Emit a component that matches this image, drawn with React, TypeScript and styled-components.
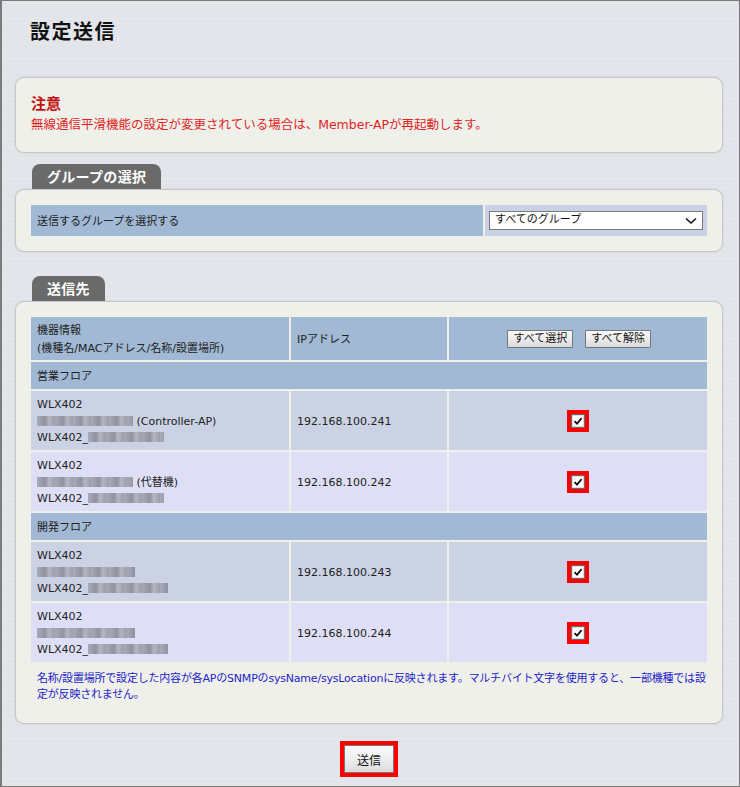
import React from 'react';
import styled, {createGlobalStyle} from 'styled-components';

const GlobalStyle = createGlobalStyle`
  html, body {
    margin: 0;
    padding: 0;
  }
  body {
    font-family: "DejaVu Sans", "Noto Sans CJK JP", sans-serif;
    font-size: 11px;
    color: #222;
  }
`;

const Page = styled.div`
  box-sizing: border-box;
  width: 740px;
  height: 787px;
  border: 1px solid #7a7a7a;
  border-left-width: 2px;
  padding: 0 16px 0 13px;
  background-color: #e3e6eb;
  background-image: repeating-linear-gradient(
    180deg,
    #e6e8ec 0px,
    #dcdfe5 1px,
    #e9ebef 2px,
    #e0e3e8 3px,
    #e4e6eb 5px
  );
  overflow: hidden;
`;

const Title = styled.h1`
  margin: 0;
  padding: 15px 0 0 15px;
  height: 61px;
  font-family: "Noto Sans CJK JP", sans-serif;
  font-size: 20px;
  font-weight: bold;
  color: #111;
  letter-spacing: 1.5px;
`;

const Panel = styled.div`
  box-sizing: border-box;
  background: #f0f0eb;
  border: 1px solid #c6c6c6;
  border-radius: 9px;
  box-shadow: 0 0 2px rgba(0, 0, 0, 0.12);
  padding: 15px;
`;

const NoticePanel = styled(Panel)`
  height: 76px;
  padding: 14px 15px 0 15px;
`;

const NoticeHead = styled.div`
  font-family: "Noto Sans CJK JP", sans-serif;
  color: #c21313;
  font-size: 15px;
  font-weight: bold;
  line-height: 22px;
  margin-bottom: 3px;
`;

const NoticeText = styled.div`
  color: #e01e1e;
  font-size: 12.5px;
  line-height: 16px;
`;

const Section = styled.section<{$top: number}>`
  margin-top: ${p => p.$top}px;
`;

const Tab = styled.div`
  display: inline-block;
  margin-left: 17px;
  height: 25px;
  line-height: 25px;
  padding: 0 15px;
  background: #6a6a6a;
  color: #fff;
  font-family: "Noto Sans CJK JP", sans-serif;
  font-size: 14px;
  font-weight: bold;
  border-radius: 8px 8px 0 0;
  letter-spacing: 0.3px;
`;

const TabRow = styled.div`
  height: 25px;
  display: flex;
  align-items: flex-end;
`;

const Table = styled.table`
  width: calc(100% + 4px);
  margin: -2px;
  border-collapse: separate;
  border-spacing: 2px;
  font-size: 11px;
  color: #222;
`;

const Cell = styled.td<{$tone: 'head' | 'light' | 'odd' | 'even'; $center?: boolean; $w?: number; $lh?: number}>`
  box-sizing: border-box;
  padding: 3px 6px 0;
  line-height: ${p => p.$lh ?? 16.5}px;
  text-align: ${p => (p.$center ? 'center' : 'left')};
  width: ${p => (p.$w ? `${p.$w}px` : 'auto')};
  background: ${p =>
    p.$tone === 'head' ? '#a1b9d4' : p.$tone === 'light' ? '#c9d1e5' : p.$tone === 'odd' ? '#cbd2e4' : '#dedff6'};
`;

const Row = styled.tr<{$h: number}>`
  height: ${p => p.$h}px;
`;

const SelectBox = styled.div`
  box-sizing: border-box;
  height: 19px;
  margin: -3px -2px 0;
  display: flex;
  align-items: center;
  justify-content: space-between;
  padding: 0 5px;
  background: #fff;
  border: 1px solid #7b7b7b;
  font-size: 11px;
  color: #111;
`;

const Button = styled.button`
  font-family: "DejaVu Sans", "Noto Sans CJK JP", sans-serif;
  font-size: 11px;
  color: #111;
  height: 18px;
  padding: 0 5px;
  line-height: 14px;
  border: 1px solid #777;
  border-radius: 1px;
  background: linear-gradient(180deg, #fafafa 0%, #ececec 50%, #dadada 100%);
  margin: 0 6px;
`;

const ButtonRow = styled.div`
  display: flex;
  justify-content: flex-end;
  padding-right: 44px;
  margin-top: -3px;
`;

const Blur = styled.span<{$w: number}>`
  display: inline-block;
  width: ${p => p.$w}px;
  height: 10px;
  vertical-align: -1px;
  background: repeating-linear-gradient(
    90deg,
    #a9acb8 0px,
    #8f939f 8px,
    #b4b7c2 12px,
    #9a9eaa 18px
  );
  filter: blur(0.7px);
`;

const RedFrame = styled.span`
  display: inline-flex;
  align-items: center;
  justify-content: center;
  background: #f00;
  padding: 4px;
  vertical-align: middle;
`;

const CheckFrame = styled(RedFrame)`
  margin-top: -3px;
`;

const CheckBox = styled.span`
  box-sizing: border-box;
  width: 14px;
  height: 14px;
  background: #fff;
  border: 1px solid #6a6a6a;
  box-shadow: inset 0 0 0 1px #ddd;
  display: flex;
  align-items: center;
  justify-content: center;
`;

const Note = styled.p`
  margin: 9px -4px 0 6px;
  color: #2323c8;
  font-size: 11px;
  line-height: 16px;
  letter-spacing: -0.2px;
`;

const SendPanel = styled(Panel)`
  padding-bottom: 20px;
`;

const Footer = styled.div`
  display: flex;
  justify-content: center;
  margin-top: 17px;
`;

const SendButton = styled.button`
  font-family: "Noto Sans CJK JP", sans-serif;
  font-size: 12px;
  color: #111;
  width: 50px;
  height: 28px;
  border: 1px solid #777;
  background: linear-gradient(180deg, #fafafa 0%, #eeeeee 50%, #dcdcdc 100%);
  padding: 0;
`;

const Check = () => (
    <CheckFrame>
        <CheckBox>
            <svg width="10" height="10" viewBox="0 0 10 10">
                <path d="M1.5 5.2 L4 7.6 L8.6 2.2" fill="none" stroke="#111" strokeWidth="1.8"/>
            </svg>
        </CheckBox>
    </CheckFrame>
);

interface IDevice {
    mac: number;
    suffix?: string;
    name: number;
    ip: string;
}

const groups: {name: string; devices: IDevice[]}[] = [
    {
        name: '営業フロア',
        devices: [
            {mac: 96, suffix: '(Controller-AP)', name: 76, ip: '192.168.100.241'},
            {mac: 96, suffix: '(代替機)', name: 76, ip: '192.168.100.242'},
        ],
    },
    {
        name: '開発フロア',
        devices: [
            {mac: 98, name: 80, ip: '192.168.100.243'},
            {mac: 98, name: 80, ip: '192.168.100.244'},
        ],
    },
];

export default function App() {
    return (
        <>
            <GlobalStyle/>
            <Page>
                <Title>設定送信</Title>

                <NoticePanel>
                    <NoticeHead>注意</NoticeHead>
                    <NoticeText>無線通信平滑機能の設定が変更されている場合は、Member-APが再起動します。</NoticeText>
                </NoticePanel>

                <Section $top={11}>
                    <TabRow><Tab>グループの選択</Tab></TabRow>
                    <Panel>
                        <Table>
                            <tbody>
                            <Row $h={31}>
                                <Cell $tone="head" $w={452}>送信するグループを選択する</Cell>
                                <Cell $tone="light">
                                    <SelectBox>
                                        <span>すべてのグループ</span>
                                        <svg width="12" height="8" viewBox="0 0 12 8">
                                            <path d="M1 1.5 L6 6 L11 1.5" fill="none" stroke="#111" strokeWidth="1.6"/>
                                        </svg>
                                    </SelectBox>
                                </Cell>
                            </Row>
                            </tbody>
                        </Table>
                    </Panel>
                </Section>

                <Section $top={24}>
                    <TabRow><Tab>送信先</Tab></TabRow>
                    <SendPanel>
                        <Table>
                            <tbody>
                            <Row $h={43}>
                                <Cell $tone="head" $w={258} $lh={18}>
                                    機器情報<br/>(機種名/MACアドレス/名称/設置場所)
                                </Cell>
                                <Cell $tone="head" $w={156}>IPアドレス</Cell>
                                <Cell $tone="head">
                                    <ButtonRow>
                                        <Button>すべて選択</Button>
                                        <Button>すべて解除</Button>
                                    </ButtonRow>
                                </Cell>
                            </Row>
                            {groups.map(g => (
                                <React.Fragment key={g.name}>
                                    <Row $h={27}>
                                        <Cell $tone="head" colSpan={3}>{g.name}</Cell>
                                    </Row>
                                    {g.devices.map((d, i) => {
                                        const tone = i % 2 === 0 ? 'odd' : 'even';
                                        return (
                                            <Row $h={59} key={d.ip}>
                                                <Cell $tone={tone}>
                                                    WLX402<br/>
                                                    <Blur $w={d.mac}/>{d.suffix ? ` ${d.suffix}` : ''}<br/>
                                                    WLX402_<Blur $w={d.name}/>
                                                </Cell>
                                                <Cell $tone={tone}>{d.ip}</Cell>
                                                <Cell $tone={tone} $center><Check/></Cell>
                                            </Row>
                                        );
                                    })}
                                </React.Fragment>
                            ))}
                            </tbody>
                        </Table>
                        <Note>
                            名称/設置場所で設定した内容が各APのSNMPのsysName/sysLocationに反映されます。マルチバイト文字を使用すると、一部機種では設定が反映されません。
                        </Note>
                    </SendPanel>
                </Section>

                <Footer>
                    <RedFrame>
                        <SendButton>送信</SendButton>
                    </RedFrame>
                </Footer>
            </Page>
        </>
    );
}
